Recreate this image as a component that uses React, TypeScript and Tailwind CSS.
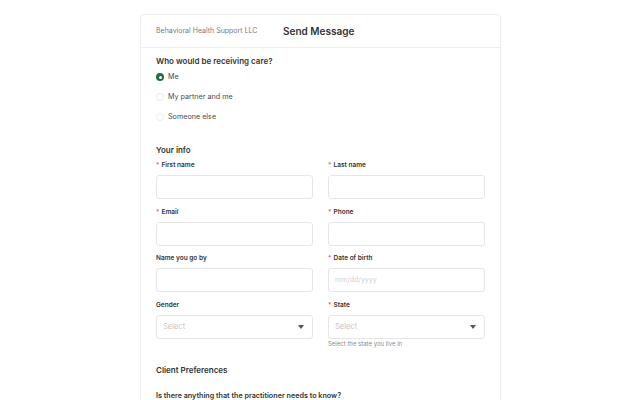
import { ReactNode } from "react";

const careOptions = ["Me", "My partner and me", "Someone else"];

function Label({ children, required }: { children: ReactNode; required?: boolean }) {
  return (
    <div className="flex h-[10px] items-center text-[6.5px] font-semibold leading-[10px] text-[#333]">
      {required && <span className="mr-[2px] text-[#e26d6d]">*</span>}
      {children}
    </div>
  );
}

function TextField({ label, required, placeholder }: { label: string; required?: boolean; placeholder?: string }) {
  return (
    <div className="flex flex-col gap-[5px]">
      <Label required={required}>{label}</Label>
      <div className="flex h-[24px] items-center rounded-[3px] border border-[#e6e6e6] bg-white px-[6px] text-[7px] text-[#d0d0d0]">
        {placeholder}
      </div>
    </div>
  );
}

function SelectField({ label, required, hint }: { label: string; required?: boolean; hint?: string }) {
  return (
    <div className="flex flex-col gap-[5px]">
      <Label required={required}>{label}</Label>
      <div className="flex h-[24px] items-center justify-between rounded-[3px] border border-[#e6e6e6] bg-white pl-[6px] pr-[8px] text-[7.5px] text-[#c4c4c4]">
        <span>Select</span>
        <svg width="6" height="4" viewBox="0 0 6 4">
          <path d="M0 0h6L3 4z" fill="#555" />
        </svg>
      </div>
      {hint && <div className="-mt-[4px] text-[6px] leading-[8px] text-[#8a8a8a]">{hint}</div>}
    </div>
  );
}

export default function App() {
  return (
    <div className="min-h-[400px] bg-white pt-[14px] font-['Inter',sans-serif]">
      <div className="ml-[140px] w-[361px] rounded-t-[4px] border border-[#ededed] bg-white shadow-[0_1px_3px_rgba(0,0,0,0.03)]">
        {/* Header */}
        <div className="flex h-[33px] items-center border-b border-[#eeeeee] px-[15px]">
          <span className="w-[127px] text-[7px] text-[#7a7a7a]">Behavioral Health Support LLC</span>
          <span className="text-[10px] font-semibold text-[#333]">Send Message</span>
        </div>

        <div className="px-[15px] pb-2 pt-[7px]">
          {/* Care recipient */}
          <h3 className="text-[8px] font-semibold leading-[12px] text-[#333]">Who would be receiving care?</h3>
          <div className="flex flex-col">
            {careOptions.map((opt, i) => (
              <label key={opt} className="flex h-[20px] items-center gap-[4px] text-[7.2px] text-[#4a4a4a]">
                {i === 0 ? (
                  <span className="flex h-[8px] w-[8px] items-center justify-center rounded-full bg-[#1f6f45]">
                    <span className="h-[3px] w-[3px] rounded-full bg-white" />
                  </span>
                ) : (
                  <span className="h-[8px] w-[8px] rounded-full border border-[#ededed]" />
                )}
                {opt}
              </label>
            ))}
          </div>

          {/* Your info */}
          <h3 className="mt-[17px] text-[8px] font-semibold leading-[12px] text-[#333]">Your info</h3>
          <div className="mt-[4px] grid grid-cols-2 gap-x-[15px] gap-y-[7.5px]">
            <TextField label="First name" required />
            <TextField label="Last name" required />
            <TextField label="Email" required />
            <TextField label="Phone" required />
            <TextField label="Name you go by" />
            <TextField label="Date of birth" required placeholder="mm/dd/yyyy" />
            <SelectField label="Gender" />
            <SelectField label="State" required hint="Select the state you live in" />
          </div>

          <h3 className="mt-[16px] text-[8px] font-semibold leading-[12px] text-[#333]">Client Preferences</h3>
          <p className="mt-[14px] text-[7.2px] font-semibold leading-[12px] text-[#333]">
            Is there anything that the practitioner needs to know?
          </p>
        </div>
      </div>
    </div>
  );
}
